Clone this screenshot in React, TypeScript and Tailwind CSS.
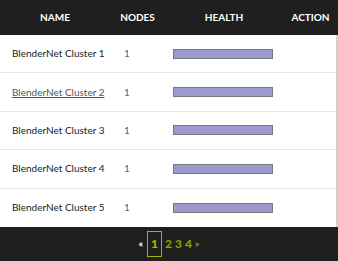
import React from 'react';

const clusters = ['BlenderNet Cluster 1', 'BlenderNet Cluster 2', 'BlenderNet Cluster 3', 'BlenderNet Cluster 4', 'BlenderNet Cluster 5'];

const App: React.FC = () => {
  return (
    <div className="w-[338px] h-[261px] bg-white font-['Lato',sans-serif] flex flex-col">
      {/* Header */}
      <div className="grid grid-cols-[110px_55px_118px_1fr] h-[35px] bg-[#1f1f1f] text-white text-[10px] font-bold items-center text-center">
        <div>NAME</div>
        <div>NODES</div>
        <div>HEALTH</div>
        <div>ACTION</div>
      </div>

      {/* Rows */}
      <div className="flex-1 border-r-2 border-[#d0d0d0]">
        {clusters.map((name, i) => (
          <div
            key={name}
            className={`grid grid-cols-[110px_55px_118px_1fr] items-center h-[38.4px] text-[10px] ${
              i < clusters.length - 1 ? 'border-b border-[#e6e6e6]' : ''
            }`}
          >
            <div className={`pl-3 whitespace-nowrap ${i === 1 ? 'text-[#555] underline' : 'text-[#222]'}`}>{name}</div>
            <div className="pl-[14px] text-[#5a5a9c]">1</div>
            <div className="pl-2">
              <div className="w-[100px] h-[10px] border border-[#7a7a7a] bg-[#9c99cf]" />
            </div>
            <div />
          </div>
        ))}
      </div>

      {/* Pagination */}
      <div className="h-[34px] bg-[#1f1f1f] flex items-center justify-center gap-[3px] text-[12px] font-black">
        <span className="text-white text-[9px] mr-[1px]">«</span>
        <span className="border border-[#a6b400] text-[#a6b400] px-[3px] py-[6px] leading-none">1</span>
        <span className="text-[#8c9a00]">2</span>
        <span className="text-[#8c9a00]">3</span>
        <span className="text-[#8c9a00]">4</span>
        <span className="text-[#8c9a00] text-[9px]">»</span>
      </div>
    </div>
  );
};

export default App;
